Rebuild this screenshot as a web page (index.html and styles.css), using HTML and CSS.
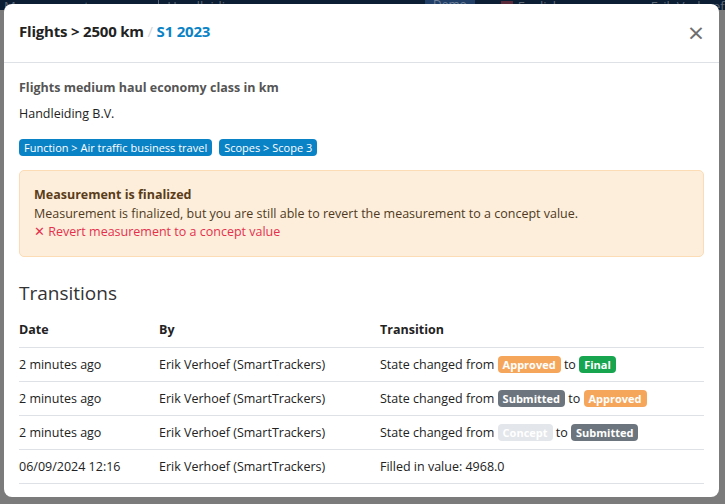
FILE: index.html
```html
<!DOCTYPE html>
<html lang="en">
<head>
    <meta charset="UTF-8">
    <title>Flights &gt; 2500 km</title>
    <link rel="stylesheet" href="styles.css">
</head>
<body>
    <div class="topbar">
        <span class="topbar-item nav">Measurements</span>
        <span class="topbar-item dots">⋯</span>
        <span class="topbar-item org-name">Handleiding</span>
        <span class="topbar-demo">Demo</span>
        <span class="topbar-item lang"><span class="flag"></span>English</span>
        <span class="topbar-bell"></span>
        <span class="topbar-item user">Erik Verhoef (</span>
    </div>

    <div class="modal">
        <div class="modal-header">
            <h5 class="modal-title">Flights &gt; 2500 km <span class="sep">/</span> <span class="period">S1 2023</span></h5>
            <span class="close">&times;</span>
        </div>

        <div class="modal-body">
            <div class="indicator">Flights medium haul economy class in km</div>
            <div class="org">Handleiding B.V.</div>
            <div class="tags">
                <span class="tag">Function &gt; Air traffic business travel</span>
                <span class="tag">Scopes &gt; Scope 3</span>
            </div>

            <div class="alert">
                <div class="alert-title">Measurement is finalized</div>
                <div>Measurement is finalized, but you are still able to revert the measurement to a concept value.</div>
                <div class="revert">&#x2715; Revert measurement to a concept value</div>
            </div>

            <h3 class="section-title">Transitions</h3>
            <table class="transitions">
                <tr>
                    <th class="col-date">Date</th>
                    <th class="col-by">By</th>
                    <th>Transition</th>
                </tr>
                <tr>
                    <td>2 minutes ago</td>
                    <td>Erik Verhoef (SmartTrackers)</td>
                    <td>State changed from <span class="state approved">Approved</span> to <span class="state final">Final</span></td>
                </tr>
                <tr>
                    <td>2 minutes ago</td>
                    <td>Erik Verhoef (SmartTrackers)</td>
                    <td>State changed from <span class="state submitted">Submitted</span> to <span class="state approved">Approved</span></td>
                </tr>
                <tr>
                    <td>2 minutes ago</td>
                    <td>Erik Verhoef (SmartTrackers)</td>
                    <td>State changed from <span class="state concept">Concept</span> to <span class="state submitted">Submitted</span></td>
                </tr>
                <tr>
                    <td>06/09/2024 12:16</td>
                    <td>Erik Verhoef (SmartTrackers)</td>
                    <td>Filled in value: 4968.0</td>
                </tr>
            </table>
        </div>
    </div>
</body>
</html>
```

FILE: styles.css
```css
html, body {
    margin: 0;
    height: 100%;
}
body {
    background-color: #7b7b7b; /* page behind the backdrop */
    font-family: "Open Sans", sans-serif;
    color: #222;
    overflow: hidden;
}
.topbar {
    height: 10px;
    background-color: #0c1e33;
    display: flex;
    align-items: flex-start;
    overflow: hidden;
}
.topbar-item {
    color: #5d6877;
    font-size: 13px;
    line-height: 10px;
    white-space: nowrap;
    padding-top: 1px;
}
.nav {
    margin-left: 4px;
}
.dots {
    margin-left: 14px;
}
.org-name {
    margin-left: 36px;
    padding-left: 8px;
    border-left: 1px solid #5d6877;
}
.topbar-demo {
    background-color: #213f66;
    color: #6d7f99;
    font-size: 12px;
    padding: 0 8px;
    line-height: 10px;
    margin-left: 185px;
}
.lang {
    margin-left: 26px;
    display: flex;
    gap: 5px;
}
.flag {
    width: 12px;
    height: 8px;
    background-color: #5a2a3a;
}
.topbar-bell {
    width: 20px;
    height: 8px;
    border-radius: 0 0 10px 10px;
    background-color: #8c2a35;
    margin-left: 50px;
}
.user {
    margin-left: 40px;
}
.modal {
    background-color: #fff;
    border-radius: 8px;
    margin: -6px 6px 0 4px;
    position: relative;
    height: 493px;
    box-sizing: border-box;
}
.modal-header {
    display: flex;
    align-items: center;
    justify-content: space-between;
    height: 58px;
    padding: 0 15px 0 15px;
    border-bottom: 1px solid #dee2e6;
}
.modal-title {
    margin: 0;
    font-size: 15px;
    font-weight: 700;
    color: #222;
    letter-spacing: -0.2px;
    margin-top: -4px;
}
.sep {
    color: #d3d7db;
    font-weight: 400;
}
.period {
    color: #0a83c6;
}
.close {
    font-size: 28px;
    color: #6e6e6e;
    line-height: 1;
    margin-top: -2px;
}
.modal-body {
    padding: 15px 15px 0 15px;
    font-size: 12.5px;
}
.indicator {
    font-weight: 700;
    color: #555;
    line-height: 20px;
}
.org {
    margin-top: 6px;
    line-height: 20px;
}
.tags {
    display: flex;
    gap: 7px;
    margin-top: 15px;
}
.tag {
    background-color: #0a83c6;
    color: #fff;
    font-size: 11px;
    line-height: 17px;
    padding: 0 5px;
    border-radius: 4px;
}
.alert {
    margin-top: 14px;
    background-color: #fdeedc;
    border: 1px solid #fbdcb4;
    border-radius: 5px;
    padding: 15px 14px 14px 14px;
    color: #4f3a21;
    font-size: 12.5px;
    line-height: 18.5px;
}
.alert-title {
    font-weight: 700;
    color: #5a3c18;
}
.revert {
    color: #e5304c;
}
.section-title {
    font-size: 19px;
    font-weight: 400;
    color: #333;
    margin: 23px 0 7px 0;
}
.transitions {
    width: 100%;
    border-collapse: collapse;
}
.transitions th {
    text-align: left;
    font-weight: 700;
    height: 34px;
    padding: 0;
    border-bottom: 1px solid #dee2e6;
}
.transitions td {
    height: 33px;
    padding: 0;
    border-bottom: 1px solid #dee2e6;
}
.col-date {
    width: 140px;
}
.col-by {
    width: 221px;
}
.state {
    display: inline-block;
    color: #fff;
    font-weight: 700;
    font-size: 11px;
    line-height: 17px;
    padding: 0 5px;
    border-radius: 4px;
}
.approved {
    background-color: #f6a65b;
}
.final {
    background-color: #17a54f;
}
.submitted {
    background-color: #6c757d;
}
.concept {
    background-color: #e3e6ea;
}
```
